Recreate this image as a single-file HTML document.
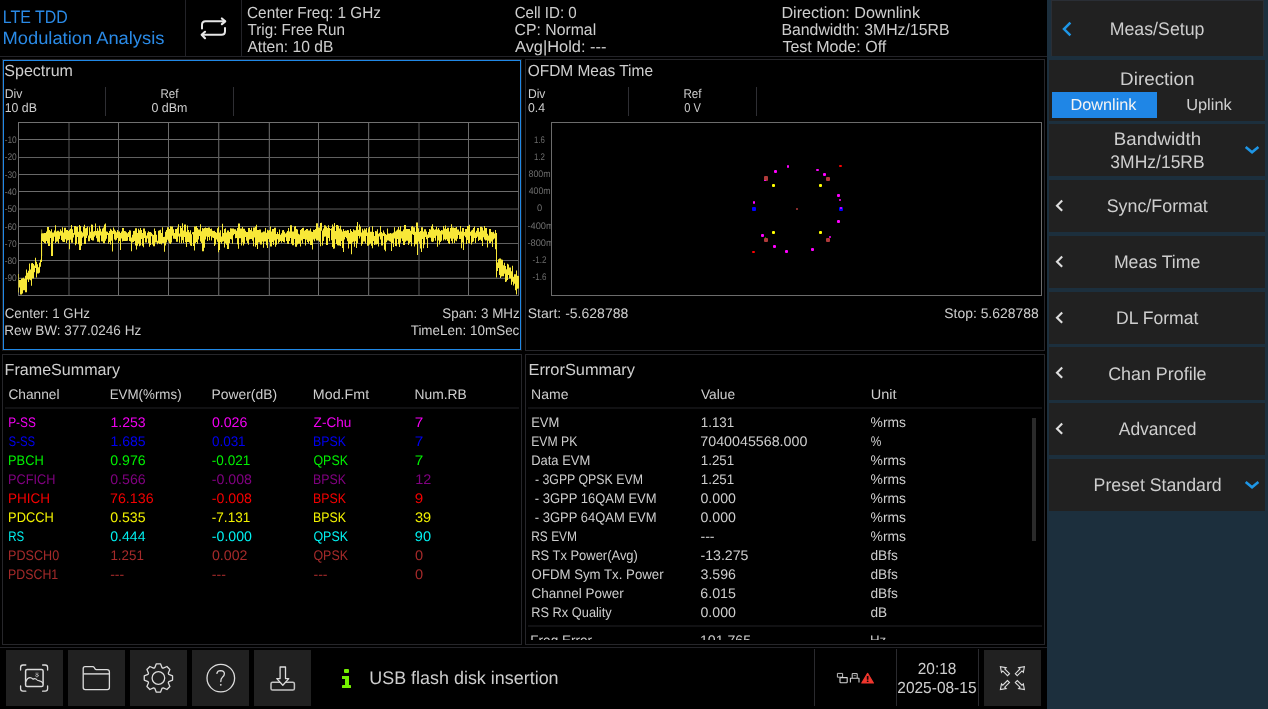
<!DOCTYPE html>
<html><head><meta charset="utf-8"><title>LTE TDD Modulation Analysis</title>
<style>
html,body{margin:0;padding:0;background:#000;}
body{width:1268px;height:709px;position:relative;overflow:hidden;font-family:"Liberation Sans",sans-serif;}
.t{position:absolute;left:0;top:0;white-space:pre;line-height:1;transform-origin:0 0;display:block;text-rendering:geometricPrecision;}
.b{position:absolute;}
svg{position:absolute;overflow:visible;}
#wrap{position:absolute;left:0;top:0;width:1268px;height:709px;will-change:transform;}
</style></head><body><div id="wrap">
<div class="b" style="left:0px;top:56px;width:1047px;height:1px;background:#232328;"></div>
<div class="b" style="left:185px;top:0px;width:1px;height:56px;background:#232328;"></div>
<div class="b" style="left:241px;top:0px;width:1px;height:56px;background:#232328;"></div>
<span class="t" style="font-size:18px;color:#2a8ae6;transform:translate(2.73px,8.40px) scaleX(0.8858);">LTE TDD</span>
<span class="t" style="font-size:17.8px;color:#2a8ae6;transform:translate(2.52px,30.30px) scaleX(1.0298);">Modulation Analysis</span>
<span class="t" style="font-size:16.1px;color:#cecece;transform:translate(247.03px,4.80px) scaleX(0.9538);">Center Freq: 1 GHz</span>
<span class="t" style="font-size:16.1px;color:#cecece;transform:translate(247.50px,21.70px) scaleX(0.9451);">Trig: Free Run</span>
<span class="t" style="font-size:16.1px;color:#cecece;transform:translate(247.40px,38.70px) scaleX(0.9700);">Atten: 10 dB</span>
<span class="t" style="font-size:16.1px;color:#cecece;transform:translate(514.64px,4.80px) scaleX(0.9387);">Cell ID: 0</span>
<span class="t" style="font-size:16.1px;color:#cecece;transform:translate(514.60px,21.70px) scaleX(0.9804);">CP: Normal</span>
<span class="t" style="font-size:16.1px;color:#cecece;transform:translate(515.00px,38.70px) scaleX(1.0196);">Avg|Hold: ---</span>
<span class="t" style="font-size:16.1px;color:#cecece;transform:translate(781.38px,4.80px) scaleX(1.0062);">Direction: Downlink</span>
<span class="t" style="font-size:16.1px;color:#cecece;transform:translate(781.41px,21.70px) scaleX(0.9837);">Bandwidth: 3MHz/15RB</span>
<span class="t" style="font-size:16.1px;color:#cecece;transform:translate(782.39px,38.70px) scaleX(0.9951);">Test Mode: Off</span>
<svg style="left:196px;top:14px" width="34" height="28" viewBox="196 14 34 28" fill="none" stroke="#e6e6e6" stroke-width="2" stroke-linecap="round" stroke-linejoin="round">
<path d="M202 28.6 V24.8 Q202 21.3 205.5 21.3 H224.6"/><path d="M221.9 18.5 L225.2 21.3 L221.9 24.2" stroke-width="2.2"/>
<path d="M225 27.9 V31.3 Q225 34.8 221.5 34.8 H202.4"/><path d="M205 31.8 L201.7 34.8 L205 38.2" stroke-width="2.2"/></svg>
<div class="b" style="left:2px;top:59px;width:520px;height:292px;background:transparent;box-sizing:border-box;border:1px solid #1a1715;border-top-color:#28282c;border-left-color:#242428;"></div>
<div class="b" style="left:3px;top:60px;width:518px;height:290px;background:transparent;box-sizing:border-box;border:1px solid #2088e6;"></div>
<div class="b" style="left:525px;top:59px;width:520px;height:292px;background:transparent;box-sizing:border-box;border:1px solid #26262a;"></div>
<div class="b" style="left:2px;top:354px;width:520px;height:291px;background:transparent;box-sizing:border-box;border:1px solid #26262a;"></div>
<div class="b" style="left:525px;top:354px;width:520px;height:291px;background:transparent;box-sizing:border-box;border:1px solid #26262a;"></div>
<div class="b" style="left:1047px;top:0px;width:221px;height:709px;background:#1c2f3d;"></div>
<div class="b" style="left:1051px;top:0px;width:213px;height:56px;background:#2a2e35;"></div>
<div class="b" style="left:1052px;top:1px;width:211px;height:55px;background:#212121;"></div>
<div class="b" style="left:1049px;top:60px;width:216px;height:61px;background:#212121;"></div>
<div class="b" style="left:1049px;top:124px;width:216px;height:52px;background:#212121;"></div>
<div class="b" style="left:1049px;top:180px;width:216px;height:52px;background:#212121;"></div>
<div class="b" style="left:1049px;top:236px;width:216px;height:52px;background:#212121;"></div>
<div class="b" style="left:1049px;top:292px;width:216px;height:52px;background:#212121;"></div>
<div class="b" style="left:1049px;top:347px;width:216px;height:53px;background:#212121;"></div>
<div class="b" style="left:1049px;top:403px;width:216px;height:52px;background:#212121;"></div>
<div class="b" style="left:1049px;top:459px;width:216px;height:52px;background:#212121;"></div>
<div class="b" style="left:1052px;top:92px;width:105px;height:26px;background:#1f86e6;"></div>
<div class="b" style="left:0px;top:647px;width:1047px;height:1px;background:#232328;"></div>
<div class="b" style="left:6px;top:650px;width:57px;height:56px;background:#212121;"></div>
<div class="b" style="left:68px;top:650px;width:57px;height:56px;background:#212121;"></div>
<div class="b" style="left:130px;top:650px;width:57px;height:56px;background:#212121;"></div>
<div class="b" style="left:192px;top:650px;width:57px;height:56px;background:#212121;"></div>
<div class="b" style="left:254px;top:650px;width:57px;height:56px;background:#212121;"></div>
<div class="b" style="left:984px;top:650px;width:57px;height:56px;background:#212121;"></div>
<div class="b" style="left:814px;top:649px;width:1px;height:57px;background:#2a2a2e;"></div>
<div class="b" style="left:896px;top:649px;width:1px;height:57px;background:#2a2a2e;"></div>
<div class="b" style="left:978px;top:649px;width:1px;height:57px;background:#2a2a2e;"></div>
<span class="t" style="font-size:16.1px;color:#cecece;transform:translate(4.32px,63.20px) scaleX(0.9963);">Spectrum</span>
<span class="t" style="font-size:12.8px;color:#cecece;transform:translate(4.65px,88.10px) scaleX(0.9543);">Div</span>
<span class="t" style="font-size:12.8px;color:#cecece;transform:translate(4.70px,102.00px) scaleX(0.9631);">10 dB</span>
<span class="t" style="font-size:12.8px;color:#cecece;transform:translate(160.39px,88.10px) scaleX(0.9053);">Ref</span>
<span class="t" style="font-size:12.8px;color:#cecece;transform:translate(151.41px,102.00px) scaleX(0.9734);">0 dBm</span>
<div class="b" style="left:105px;top:87px;width:1px;height:29px;background:#2e2e33;"></div>
<div class="b" style="left:233px;top:87px;width:1px;height:29px;background:#2e2e33;"></div>
<svg style="left:0;top:0" width="524" height="352" shape-rendering="crispEdges"><rect x="18" y="122" width="1" height="174" fill="#707070"/><rect x="68" y="122" width="1" height="174" fill="#2c2c2c"/><rect x="69" y="122" width="1" height="174" fill="#2c2c2c"/><rect x="118" y="122" width="1" height="174" fill="#6c6c6c"/><rect x="168" y="122" width="1" height="174" fill="#6c6c6c"/><rect x="218" y="122" width="1" height="174" fill="#545454"/><rect x="219" y="122" width="1" height="174" fill="#1c1c1c"/><rect x="268" y="122" width="1" height="174" fill="#161616"/><rect x="269" y="122" width="1" height="174" fill="#5a5a5a"/><rect x="318" y="122" width="1" height="174" fill="#6c6c6c"/><rect x="368" y="122" width="1" height="174" fill="#5e5e5e"/><rect x="369" y="122" width="1" height="174" fill="#121212"/><rect x="418" y="122" width="1" height="174" fill="#2c2c2c"/><rect x="419" y="122" width="1" height="174" fill="#2c2c2c"/><rect x="468" y="122" width="1" height="174" fill="#6c6c6c"/><rect x="518" y="122" width="1" height="174" fill="#626262"/><rect x="18" y="122" width="501" height="1" fill="#707070" style="mix-blend-mode:lighten"/><rect x="18" y="139" width="501" height="1" fill="#6c6c6c" style="mix-blend-mode:lighten"/><rect x="18" y="157" width="501" height="1" fill="#606060" style="mix-blend-mode:lighten"/><rect x="18" y="174" width="501" height="1" fill="#686868" style="mix-blend-mode:lighten"/><rect x="18" y="191" width="501" height="1" fill="#6c6c6c" style="mix-blend-mode:lighten"/><rect x="18" y="208" width="501" height="1" fill="#2c2c2c" style="mix-blend-mode:lighten"/><rect x="18" y="209" width="501" height="1" fill="#303030" style="mix-blend-mode:lighten"/><rect x="18" y="226" width="501" height="1" fill="#606060" style="mix-blend-mode:lighten"/><rect x="18" y="243" width="501" height="1" fill="#606060" style="mix-blend-mode:lighten"/><rect x="18" y="260" width="501" height="1" fill="#666666" style="mix-blend-mode:lighten"/><rect x="18" y="277" width="501" height="1" fill="#1c1c1c" style="mix-blend-mode:lighten"/><rect x="18" y="278" width="501" height="1" fill="#585858" style="mix-blend-mode:lighten"/><rect x="18" y="295" width="501" height="1" fill="#686868" style="mix-blend-mode:lighten"/></svg>
<span class="t" style="font-size:9.6px;color:#707070;transform:translate(4.67px,136.00px) scaleX(0.8720);">-10</span>
<span class="t" style="font-size:9.6px;color:#707070;transform:translate(4.67px,153.30px) scaleX(0.8720);">-20</span>
<span class="t" style="font-size:9.6px;color:#707070;transform:translate(4.67px,170.60px) scaleX(0.8720);">-30</span>
<span class="t" style="font-size:9.6px;color:#707070;transform:translate(4.67px,187.90px) scaleX(0.8720);">-40</span>
<span class="t" style="font-size:9.6px;color:#707070;transform:translate(4.67px,205.20px) scaleX(0.8720);">-50</span>
<span class="t" style="font-size:9.6px;color:#707070;transform:translate(4.67px,222.50px) scaleX(0.8720);">-60</span>
<span class="t" style="font-size:9.6px;color:#707070;transform:translate(4.67px,239.80px) scaleX(0.8720);">-70</span>
<span class="t" style="font-size:9.6px;color:#707070;transform:translate(4.67px,257.10px) scaleX(0.8720);">-80</span>
<span class="t" style="font-size:9.6px;color:#707070;transform:translate(4.67px,274.40px) scaleX(0.8720);">-90</span>
<svg style="left:0;top:0" width="524" height="352"><path d="M18.4 274.0h0.6V292.4h-0.6zM19 280.1h1V287.5h-1zM20 279.9h1V294.6h-1zM21 278.6h1V294.6h-1zM22 278.2h1V293.6h-1zM23 277.8h1V290.2h-1zM24 278.7h1V290.2h-1zM25 275.7h1V292.3h-1zM26 269.4h1V292.3h-1zM27 272.8h1V279.4h-1zM28 270.7h1V282.1h-1zM29 263.6h1V279.4h-1zM30 269.4h1V280.3h-1zM31 263.2h1V285.7h-1zM32 263.1h1V278.6h-1zM33 264.0h1V278.6h-1zM34 265.6h1V272.2h-1zM35 257.7h1V268.0h-1zM36 261.7h1V277.6h-1zM37 264.2h1V273.5h-1zM38 267.2h1V273.5h-1zM39 262.7h1V272.8h-1zM40 259.7h1V266.8h-1zM41 233.6h1V262.0h-1zM42 233.3h1V240.9h-1zM43 233.2h1V242.1h-1zM44 233.0h1V242.9h-1zM45 233.1h1V243.5h-1zM46 231.6h1V241.0h-1zM47 227.0h1V242.9h-1zM48 227.0h1V246.0h-1zM49 230.0h1V246.1h-1zM50 231.2h1V238.1h-1zM51 229.2h1V256.1h-1zM52 232.4h1V256.1h-1zM53 232.6h1V241.3h-1zM54 230.6h1V236.8h-1zM55 225.3h1V243.0h-1zM56 231.5h1V241.7h-1zM57 230.7h1V241.6h-1zM58 230.7h1V243.4h-1zM59 231.7h1V239.0h-1zM60 229.2h1V235.8h-1zM61 230.7h1V239.9h-1zM62 227.2h1V241.6h-1zM63 232.5h1V241.9h-1zM64 227.7h1V241.9h-1zM65 227.7h1V239.2h-1zM66 230.0h1V243.1h-1zM67 229.9h1V240.5h-1zM68 230.9h1V239.9h-1zM69 229.7h1V249.3h-1zM70 228.7h1V239.7h-1zM71 225.1h1V242.8h-1zM72 229.3h1V242.8h-1zM73 232.9h1V237.6h-1zM74 225.9h1V234.8h-1zM75 225.9h1V245.2h-1zM76 226.7h1V243.7h-1zM77 226.7h1V236.9h-1zM78 231.7h1V244.3h-1zM79 224.9h1V250.0h-1zM80 226.0h1V250.0h-1zM81 231.3h1V245.7h-1zM82 232.5h1V237.8h-1zM83 226.8h1V236.5h-1zM84 224.7h1V244.1h-1zM85 228.3h1V244.1h-1zM86 227.8h1V238.1h-1zM87 226.4h1V235.5h-1zM88 235.5h1V241.3h-1zM89 227.3h1V241.3h-1zM90 231.8h1V238.3h-1zM91 224.4h1V240.1h-1zM92 224.7h1V240.4h-1zM93 231.5h1V240.4h-1zM94 230.9h1V236.7h-1zM95 223.6h1V235.4h-1zM96 230.9h1V238.2h-1zM97 228.3h1V241.7h-1zM98 230.7h1V241.7h-1zM99 225.8h1V242.5h-1zM100 228.8h1V235.4h-1zM101 231.5h1V241.3h-1zM102 228.5h1V241.6h-1zM103 227.4h1V243.2h-1zM104 224.6h1V243.2h-1zM105 223.6h1V240.8h-1zM106 231.6h1V238.7h-1zM107 231.8h1V235.1h-1zM108 233.1h1V243.7h-1zM109 230.9h1V241.9h-1zM110 228.8h1V244.5h-1zM111 229.7h1V240.8h-1zM112 230.9h1V251.5h-1zM113 227.6h1V234.1h-1zM114 229.6h1V239.6h-1zM115 230.8h1V240.6h-1zM116 232.2h1V239.8h-1zM117 229.9h1V238.1h-1zM118 231.4h1V242.9h-1zM119 231.4h1V240.9h-1zM120 232.9h1V249.9h-1zM121 231.4h1V238.4h-1zM122 227.9h1V241.6h-1zM123 227.9h1V241.1h-1zM124 230.9h1V241.0h-1zM125 231.2h1V241.0h-1zM126 232.3h1V240.9h-1zM127 233.3h1V240.7h-1zM128 232.1h1V236.9h-1zM129 230.3h1V241.1h-1zM130 230.6h1V241.6h-1zM131 237.5h1V251.3h-1zM132 234.7h1V242.6h-1zM133 231.1h1V242.0h-1zM134 230.8h1V240.9h-1zM135 228.2h1V245.4h-1zM136 228.2h1V249.4h-1zM137 232.9h1V245.8h-1zM138 228.8h1V243.8h-1zM139 230.3h1V246.2h-1zM140 228.0h1V245.4h-1zM141 230.1h1V239.1h-1zM142 233.1h1V245.8h-1zM143 228.6h1V247.3h-1zM144 228.6h1V238.1h-1zM145 231.2h1V242.4h-1zM146 235.6h1V242.5h-1zM147 232.7h1V238.5h-1zM148 231.3h1V243.1h-1zM149 232.1h1V246.7h-1zM150 232.1h1V244.9h-1zM151 232.8h1V236.2h-1zM152 234.2h1V244.5h-1zM153 235.0h1V246.2h-1zM154 228.6h1V246.2h-1zM155 230.9h1V242.4h-1zM156 234.7h1V242.4h-1zM157 240.7h1V244.3h-1zM158 230.7h1V243.0h-1zM159 230.2h1V244.0h-1zM160 229.7h1V243.8h-1zM161 233.0h1V244.5h-1zM162 227.3h1V242.9h-1zM163 237.0h1V242.9h-1zM164 236.8h1V251.7h-1zM165 231.8h1V245.5h-1zM166 230.0h1V242.5h-1zM167 227.2h1V239.7h-1zM168 227.2h1V241.3h-1zM169 229.1h1V243.2h-1zM170 226.2h1V244.1h-1zM171 226.6h1V242.5h-1zM172 226.6h1V235.7h-1zM173 229.2h1V238.7h-1zM174 233.1h1V238.7h-1zM175 228.9h1V239.0h-1zM176 228.9h1V241.7h-1zM177 227.6h1V241.7h-1zM178 224.3h1V236.6h-1zM179 233.6h1V242.7h-1zM180 226.0h1V236.7h-1zM181 227.9h1V243.3h-1zM182 223.3h1V240.3h-1zM183 230.4h1V242.9h-1zM184 224.4h1V237.1h-1zM185 224.4h1V242.3h-1zM186 231.7h1V247.0h-1zM187 225.6h1V241.9h-1zM188 230.0h1V241.9h-1zM189 232.2h1V242.8h-1zM190 230.2h1V245.4h-1zM191 234.3h1V245.9h-1zM192 232.3h1V234.3h-1zM193 231.9h1V245.9h-1zM194 226.4h1V250.6h-1zM195 226.4h1V243.1h-1zM196 226.1h1V242.1h-1zM197 227.9h1V243.7h-1zM198 229.6h1V239.6h-1zM199 229.6h1V235.9h-1zM200 224.3h1V241.6h-1zM201 231.3h1V242.9h-1zM202 228.1h1V251.2h-1zM203 228.6h1V251.2h-1zM204 227.9h1V247.8h-1zM205 227.5h1V239.4h-1zM206 227.9h1V236.4h-1zM207 227.9h1V240.9h-1zM208 227.5h1V237.1h-1zM209 227.5h1V240.2h-1zM210 228.9h1V236.2h-1zM211 228.5h1V240.6h-1zM212 230.7h1V237.4h-1zM213 231.1h1V237.9h-1zM214 230.8h1V246.1h-1zM215 231.9h1V244.6h-1zM216 232.7h1V239.5h-1zM217 228.3h1V241.8h-1zM218 226.6h1V252.3h-1zM219 232.4h1V249.9h-1zM220 230.2h1V242.2h-1zM221 236.6h1V243.7h-1zM222 223.8h1V241.8h-1zM223 232.9h1V241.3h-1zM224 228.9h1V247.4h-1zM225 228.3h1V243.2h-1zM226 232.5h1V244.8h-1zM227 230.4h1V249.1h-1zM228 230.5h1V249.1h-1zM229 232.1h1V243.0h-1zM230 228.3h1V239.0h-1zM231 228.6h1V239.6h-1zM232 228.6h1V243.7h-1zM233 228.6h1V235.3h-1zM234 229.2h1V234.1h-1zM235 229.2h1V238.2h-1zM236 230.8h1V238.1h-1zM237 228.1h1V244.2h-1zM238 223.4h1V248.7h-1zM239 223.4h1V238.2h-1zM240 228.6h1V238.2h-1zM241 228.6h1V245.4h-1zM242 227.1h1V242.4h-1zM243 228.7h1V245.4h-1zM244 228.7h1V243.7h-1zM245 230.7h1V237.1h-1zM246 232.1h1V240.8h-1zM247 232.1h1V243.1h-1zM248 228.1h1V244.7h-1zM249 228.1h1V239.5h-1zM250 230.0h1V239.1h-1zM251 227.7h1V239.1h-1zM252 231.3h1V240.7h-1zM253 227.5h1V246.2h-1zM254 227.5h1V237.6h-1zM255 226.6h1V246.8h-1zM256 224.7h1V245.1h-1zM257 230.0h1V249.0h-1zM258 230.0h1V242.6h-1zM259 229.6h1V242.6h-1zM260 229.6h1V244.5h-1zM261 232.5h1V244.5h-1zM262 232.2h1V241.6h-1zM263 231.6h1V247.8h-1zM264 231.6h1V241.6h-1zM265 228.0h1V241.6h-1zM266 232.7h1V245.3h-1zM267 229.8h1V248.1h-1zM268 230.4h1V239.0h-1zM269 229.9h1V242.0h-1zM270 226.6h1V246.6h-1zM271 231.4h1V246.6h-1zM272 228.9h1V241.9h-1zM273 228.9h1V244.9h-1zM274 227.7h1V240.6h-1zM275 227.7h1V246.7h-1zM276 234.0h1V244.7h-1zM277 231.9h1V239.3h-1zM278 233.9h1V243.4h-1zM279 229.4h1V242.0h-1zM280 234.7h1V241.1h-1zM281 233.3h1V242.7h-1zM282 230.3h1V240.9h-1zM283 229.9h1V241.9h-1zM284 231.8h1V242.6h-1zM285 233.4h1V237.3h-1zM286 232.4h1V241.1h-1zM287 230.9h1V243.8h-1zM288 228.1h1V243.9h-1zM289 231.4h1V241.1h-1zM290 225.3h1V238.0h-1zM291 225.3h1V243.8h-1zM292 231.6h1V245.3h-1zM293 231.6h1V245.3h-1zM294 226.5h1V239.1h-1zM295 225.9h1V246.7h-1zM296 229.0h1V246.7h-1zM297 229.5h1V244.4h-1zM298 233.7h1V243.8h-1zM299 234.4h1V243.8h-1zM300 230.1h1V246.6h-1zM301 229.1h1V240.5h-1zM302 228.0h1V243.6h-1zM303 227.8h1V239.0h-1zM304 230.7h1V239.0h-1zM305 230.0h1V245.6h-1zM306 228.9h1V239.8h-1zM307 228.9h1V241.9h-1zM308 230.6h1V243.4h-1zM309 230.6h1V241.3h-1zM310 228.5h1V245.0h-1zM311 231.6h1V245.0h-1zM312 231.9h1V249.4h-1zM313 229.7h1V239.4h-1zM314 229.9h1V241.2h-1zM315 228.9h1V238.7h-1zM316 223.3h1V240.5h-1zM317 223.3h1V240.5h-1zM318 227.4h1V240.5h-1zM319 227.4h1V241.7h-1zM320 223.1h1V246.2h-1zM321 222.7h1V230.7h-1zM322 230.4h1V245.4h-1zM323 228.5h1V241.1h-1zM324 225.2h1V236.7h-1zM325 225.4h1V236.4h-1zM326 226.8h1V245.0h-1zM327 228.1h1V245.0h-1zM328 225.2h1V237.9h-1zM329 227.9h1V241.3h-1zM330 228.9h1V230.2h-1zM331 228.2h1V240.3h-1zM332 224.6h1V246.9h-1zM333 226.5h1V248.7h-1zM334 223.0h1V248.4h-1zM335 230.9h1V239.3h-1zM336 224.9h1V243.9h-1zM337 224.9h1V245.2h-1zM338 225.7h1V245.6h-1zM339 228.6h1V245.6h-1zM340 225.8h1V246.0h-1zM341 229.5h1V241.1h-1zM342 231.4h1V248.1h-1zM343 228.9h1V252.0h-1zM344 231.1h1V239.6h-1zM345 230.4h1V236.9h-1zM346 230.7h1V238.2h-1zM347 229.9h1V241.3h-1zM348 230.2h1V248.6h-1zM349 233.0h1V244.1h-1zM350 229.0h1V244.1h-1zM351 231.0h1V254.2h-1zM352 232.0h1V242.6h-1zM353 229.3h1V241.5h-1zM354 230.2h1V246.8h-1zM355 230.2h1V241.2h-1zM356 226.3h1V248.1h-1zM357 222.0h1V243.2h-1zM358 229.7h1V235.9h-1zM359 224.6h1V238.4h-1zM360 226.5h1V236.5h-1zM361 232.4h1V245.7h-1zM362 228.7h1V244.0h-1zM363 230.6h1V241.5h-1zM364 228.5h1V241.6h-1zM365 229.6h1V243.4h-1zM366 228.0h1V236.0h-1zM367 232.5h1V245.7h-1zM368 228.6h1V245.7h-1zM369 227.1h1V244.5h-1zM370 231.8h1V243.5h-1zM371 231.8h1V245.8h-1zM372 226.3h1V248.3h-1zM373 232.0h1V240.9h-1zM374 236.1h1V245.0h-1zM375 231.1h1V244.5h-1zM376 231.2h1V244.5h-1zM377 229.3h1V244.1h-1zM378 233.8h1V246.5h-1zM379 232.8h1V236.5h-1zM380 226.0h1V239.5h-1zM381 231.9h1V245.5h-1zM382 233.3h1V245.5h-1zM383 230.6h1V236.1h-1zM384 232.6h1V249.8h-1zM385 234.0h1V251.3h-1zM386 234.8h1V242.2h-1zM387 228.5h1V240.5h-1zM388 233.5h1V240.5h-1zM389 233.6h1V241.2h-1zM390 233.0h1V241.8h-1zM391 233.5h1V250.9h-1zM392 233.3h1V243.0h-1zM393 232.4h1V247.0h-1zM394 227.2h1V238.5h-1zM395 231.5h1V246.0h-1zM396 230.5h1V246.3h-1zM397 229.4h1V239.1h-1zM398 226.9h1V244.2h-1zM399 229.8h1V247.0h-1zM400 226.3h1V242.8h-1zM401 231.2h1V238.6h-1zM402 231.2h1V241.0h-1zM403 229.4h1V245.0h-1zM404 225.0h1V245.0h-1zM405 225.0h1V241.7h-1zM406 228.9h1V240.8h-1zM407 228.9h1V240.8h-1zM408 228.9h1V245.0h-1zM409 229.1h1V243.3h-1zM410 230.8h1V242.3h-1zM411 226.6h1V246.3h-1zM412 226.0h1V234.2h-1zM413 227.3h1V235.0h-1zM414 227.3h1V246.5h-1zM415 231.7h1V244.2h-1zM416 222.4h1V244.2h-1zM417 222.4h1V254.9h-1zM418 228.3h1V241.5h-1zM419 232.1h1V243.7h-1zM420 231.0h1V248.4h-1zM421 227.2h1V252.0h-1zM422 227.2h1V238.9h-1zM423 231.4h1V248.2h-1zM424 229.3h1V244.5h-1zM425 229.3h1V236.9h-1zM426 231.6h1V239.2h-1zM427 234.6h1V247.9h-1zM428 232.0h1V238.1h-1zM429 229.0h1V237.5h-1zM430 229.5h1V237.7h-1zM431 226.2h1V241.4h-1zM432 224.2h1V241.9h-1zM433 228.5h1V241.5h-1zM434 229.7h1V237.9h-1zM435 229.3h1V240.8h-1zM436 226.8h1V235.7h-1zM437 229.4h1V246.8h-1zM438 227.9h1V240.4h-1zM439 229.8h1V244.6h-1zM440 231.1h1V242.0h-1zM441 229.9h1V240.8h-1zM442 230.2h1V234.5h-1zM443 225.9h1V240.4h-1zM444 228.6h1V239.3h-1zM445 225.5h1V240.3h-1zM446 229.0h1V239.3h-1zM447 227.8h1V241.0h-1zM448 227.8h1V243.3h-1zM449 231.5h1V244.1h-1zM450 228.0h1V238.5h-1zM451 224.2h1V240.9h-1zM452 227.4h1V243.4h-1zM453 227.4h1V238.7h-1zM454 227.9h1V243.1h-1zM455 227.7h1V240.4h-1zM456 226.9h1V241.2h-1zM457 229.5h1V238.7h-1zM458 229.5h1V235.1h-1zM459 231.5h1V239.0h-1zM460 226.0h1V238.9h-1zM461 231.5h1V248.3h-1zM462 227.9h1V242.4h-1zM463 227.9h1V250.1h-1zM464 232.0h1V235.7h-1zM465 228.9h1V237.2h-1zM466 229.0h1V244.1h-1zM467 226.0h1V240.0h-1zM468 226.0h1V243.2h-1zM469 224.7h1V243.2h-1zM470 231.7h1V235.7h-1zM471 230.5h1V244.4h-1zM472 229.8h1V242.2h-1zM473 227.9h1V241.5h-1zM474 226.5h1V238.1h-1zM475 232.4h1V243.0h-1zM476 230.8h1V237.9h-1zM477 228.1h1V236.7h-1zM478 228.1h1V241.1h-1zM479 231.8h1V240.0h-1zM480 226.8h1V239.8h-1zM481 226.8h1V240.9h-1zM482 227.4h1V246.0h-1zM483 230.6h1V237.3h-1zM484 225.9h1V239.5h-1zM485 227.9h1V240.5h-1zM486 227.9h1V240.3h-1zM487 233.8h1V247.5h-1zM488 235.4h1V240.8h-1zM489 229.0h1V242.9h-1zM490 229.0h1V243.0h-1zM491 232.1h1V241.4h-1zM492 232.2h1V246.9h-1zM493 231.7h1V239.5h-1zM494 233.5h1V238.5h-1zM495 230.0h1V249.3h-1zM496 233.1h1V277.5h-1zM497 262.4h1V271.1h-1zM498 259.2h1V267.9h-1zM499 258.4h1V274.9h-1zM500 258.4h1V278.1h-1zM501 259.5h1V276.6h-1zM502 259.8h1V276.2h-1zM503 265.3h1V276.2h-1zM504 262.8h1V273.7h-1zM505 266.1h1V282.1h-1zM506 269.3h1V281.4h-1zM507 263.8h1V280.1h-1zM508 264.5h1V274.9h-1zM509 267.5h1V278.4h-1zM510 267.6h1V278.4h-1zM511 271.2h1V284.7h-1zM512 265.7h1V281.7h-1zM513 276.7h1V285.6h-1zM514 274.2h1V283.8h-1zM515 274.2h1V290.2h-1zM516 270.4h1V294.6h-1zM517 275.8h1V288.7h-1zM518 276.0h1V288.5h-1zM41.5 229.5h.6V256h-.6z" fill="#f8e838"/></svg>
<span class="t" style="font-size:13.9px;color:#cecece;transform:translate(4.74px,307.30px) scaleX(0.9598);">Center: 1 GHz</span>
<span class="t" style="font-size:13.9px;color:#cecece;transform:translate(4.30px,324.20px) scaleX(0.9761);">Rew BW: 377.0246 Hz</span>
<span class="t" style="font-size:13.9px;color:#cecece;transform:translate(442.30px,307.30px) scaleX(0.9635);">Span: 3 MHz</span>
<span class="t" style="font-size:13.9px;color:#cecece;transform:translate(410.66px,324.20px) scaleX(0.9686);">TimeLen: 10mSec</span>
<span class="t" style="font-size:16.1px;color:#cecece;transform:translate(527.68px,63.20px) scaleX(0.9600);">OFDM Meas Time</span>
<span class="t" style="font-size:12.8px;color:#cecece;transform:translate(527.96px,88.10px) scaleX(0.9429);">Div</span>
<span class="t" style="font-size:12.8px;color:#cecece;transform:translate(527.92px,102.00px) scaleX(0.9565);">0.4</span>
<span class="t" style="font-size:12.8px;color:#cecece;transform:translate(683.44px,88.10px) scaleX(0.9105);">Ref</span>
<span class="t" style="font-size:12.8px;color:#cecece;transform:translate(684.17px,102.00px) scaleX(0.8669);">0 V</span>
<div class="b" style="left:628px;top:87px;width:1px;height:29px;background:#2e2e33;"></div>
<div class="b" style="left:756px;top:87px;width:1px;height:29px;background:#2e2e33;"></div>
<div class="b" style="left:551px;top:122px;width:491px;height:174px;background:transparent;box-sizing:border-box;border:1px solid #6c6c6c;"></div>
<div class="b" style="left:526px;top:125px;width:25px;height:168px;overflow:hidden">
<span class="t" style="font-size:9.6px;color:#6c6c6c;transform:translate(7.94px,11.10px) scaleX(0.8163);">1.6</span>
<span class="t" style="font-size:9.6px;color:#6c6c6c;transform:translate(7.94px,28.10px) scaleX(0.8205);">1.2</span>
<span class="t" style="font-size:9.6px;color:#6c6c6c;transform:translate(2.50px,45.00px) scaleX(0.9211);">800m</span>
<span class="t" style="font-size:9.6px;color:#6c6c6c;transform:translate(2.68px,62.10px) scaleX(0.9137);">400m</span>
<span class="t" style="font-size:9.6px;color:#6c6c6c;transform:translate(10.89px,79.10px) scaleX(0.9730);">0</span>
<span class="t" style="font-size:9.6px;color:#6c6c6c;transform:translate(1.44px,96.50px) scaleX(0.9653);">-400m</span>
<span class="t" style="font-size:9.6px;color:#6c6c6c;transform:translate(1.44px,113.50px) scaleX(0.9653);">-800m</span>
<span class="t" style="font-size:9.6px;color:#6c6c6c;transform:translate(6.59px,130.50px) scaleX(0.8381);">-1.2</span>
<span class="t" style="font-size:9.6px;color:#6c6c6c;transform:translate(6.59px,148.40px) scaleX(0.8348);">-1.6</span>
</div>
<div class="b" style="left:786.6px;top:165.4px;width:2.6px;height:2.6px;background:#f0f;border-radius:1px;"></div>
<div class="b" style="left:774.1px;top:170.1px;width:3px;height:3px;background:#f0f;border-radius:1px;"></div>
<div class="b" style="left:816.2px;top:168.9px;width:2.6px;height:2.6px;background:#f0f;border-radius:1px;"></div>
<div class="b" style="left:823.2px;top:173.2px;width:2.8px;height:2.8px;background:#f0f;border-radius:1px;"></div>
<div class="b" style="left:839.4px;top:164.9px;width:2.4px;height:2.4px;background:#f00;border-radius:1px;"></div>
<div class="b" style="left:764.1px;top:176.3px;width:4.4px;height:4.4px;background:#b03a3a;border-radius:1px;"></div>
<div class="b" style="left:826.1px;top:176.5px;width:4.4px;height:4.4px;background:#b03a3a;border-radius:1px;"></div>
<div class="b" style="left:771.7px;top:183.9px;width:3px;height:3px;background:#ff0;border-radius:1px;"></div>
<div class="b" style="left:819.1px;top:183.9px;width:3px;height:3px;background:#ff0;border-radius:1px;"></div>
<div class="b" style="left:837.1px;top:194.4px;width:3px;height:3px;background:#f0f;border-radius:1px;"></div>
<div class="b" style="left:838.7px;top:198.9px;width:2.6px;height:2.6px;background:#f0f;border-radius:1px;"></div>
<div class="b" style="left:752.7px;top:201.4px;width:2.4px;height:2.4px;background:#f0f;border-radius:1px;"></div>
<div class="b" style="left:751.5px;top:207.1px;width:4px;height:4px;background:#00f;border-radius:1px;"></div>
<div class="b" style="left:838.8px;top:207.1px;width:4px;height:4px;background:#00f;border-radius:1px;"></div>
<div class="b" style="left:839.8px;top:207.2px;width:2.2px;height:2.2px;background:#f0f;border-radius:1px;"></div>
<div class="b" style="left:796.3px;top:207.9px;width:2px;height:2px;background:#b03a3a;border-radius:1px;"></div>
<div class="b" style="left:836.9px;top:219.8px;width:3px;height:3px;background:#f0f;border-radius:1px;"></div>
<div class="b" style="left:771.6px;top:231px;width:3.2px;height:3.2px;background:#ff0;border-radius:1px;"></div>
<div class="b" style="left:819.1px;top:231.1px;width:3px;height:3px;background:#ff0;border-radius:1px;"></div>
<div class="b" style="left:760.8px;top:234.2px;width:2.8px;height:2.8px;background:#f0f;border-radius:1px;"></div>
<div class="b" style="left:764.1px;top:237.5px;width:4.4px;height:4.4px;background:#b03a3a;border-radius:1px;"></div>
<div class="b" style="left:825.6px;top:237.6px;width:4.2px;height:4.2px;background:#b03a3a;border-radius:1px;"></div>
<div class="b" style="left:828.8px;top:235.6px;width:2.6px;height:2.6px;background:#f0f;border-radius:1px;"></div>
<div class="b" style="left:773px;top:245.2px;width:2.8px;height:2.8px;background:#f0f;border-radius:1px;"></div>
<div class="b" style="left:785.4px;top:250px;width:3px;height:3px;background:#f0f;border-radius:1px;"></div>
<div class="b" style="left:811px;top:247.7px;width:3px;height:3px;background:#f0f;border-radius:1px;"></div>
<div class="b" style="left:752px;top:250.8px;width:2.6px;height:2.6px;background:#f00;border-radius:1px;"></div>
<div class="b" style="left:764.2px;top:179.5px;width:1.6px;height:1.6px;background:#f0f;border-radius:1px;"></div>
<div class="b" style="left:764.5px;top:236.9px;width:1.4px;height:1.4px;background:#0c0;border-radius:1px;"></div>
<span class="t" style="font-size:13.9px;color:#cecece;transform:translate(527.77px,306.80px) scaleX(1.0090);">Start: -5.628788</span>
<span class="t" style="font-size:13.9px;color:#cecece;transform:translate(944.27px,306.80px) scaleX(1.0017);">Stop: 5.628788</span>
<span class="t" style="font-size:16.1px;color:#cecece;transform:translate(4.59px,361.50px) scaleX(1.0004);">FrameSummary</span>
<span class="t" style="font-size:13.9px;color:#cecece;transform:translate(8.42px,388.10px) scaleX(0.9875);">Channel</span>
<span class="t" style="font-size:13.9px;color:#cecece;transform:translate(109.72px,388.10px) scaleX(0.9600);">EVM(%rms)</span>
<span class="t" style="font-size:13.9px;color:#cecece;transform:translate(211.58px,388.10px) scaleX(0.9980);">Power(dB)</span>
<span class="t" style="font-size:13.9px;color:#cecece;transform:translate(312.84px,388.10px) scaleX(1.0268);">Mod.Fmt</span>
<span class="t" style="font-size:13.9px;color:#cecece;transform:translate(414.48px,388.10px) scaleX(0.9956);">Num.RB</span>
<div class="b" style="left:5px;top:407px;width:514px;height:2px;background:#111113;"></div>
<span class="t" style="font-size:13.9px;color:#f200f2;transform:translate(8.14px,416.00px) scaleX(0.8555);">P-SS</span>
<span class="t" style="font-size:13.9px;color:#f200f2;transform:translate(110.39px,416.00px) scaleX(1.0149);">1.253</span>
<span class="t" style="font-size:13.9px;color:#f200f2;transform:translate(211.89px,416.00px) scaleX(1.0207);">0.026</span>
<span class="t" style="font-size:13.9px;color:#f200f2;transform:translate(313.57px,416.00px) scaleX(0.9788);">Z-Chu</span>
<span class="t" style="font-size:13.9px;color:#f200f2;transform:translate(414.74px,416.00px) scaleX(1.1027);">7</span>
<span class="t" style="font-size:13.9px;color:#0000f2;transform:translate(8.59px,435.00px) scaleX(0.8193);">S-SS</span>
<span class="t" style="font-size:13.9px;color:#0000f2;transform:translate(110.39px,435.00px) scaleX(1.0130);">1.685</span>
<span class="t" style="font-size:13.9px;color:#0000f2;transform:translate(211.92px,435.00px) scaleX(0.9689);">0.031</span>
<span class="t" style="font-size:13.9px;color:#0000f2;transform:translate(313.00px,435.00px) scaleX(0.8895);">BPSK</span>
<span class="t" style="font-size:13.9px;color:#0000f2;transform:translate(414.74px,435.00px) scaleX(1.1027);">7</span>
<span class="t" style="font-size:13.9px;color:#00f000;transform:translate(8.06px,454.00px) scaleX(0.9225);">PBCH</span>
<span class="t" style="font-size:13.9px;color:#00f000;transform:translate(110.19px,454.00px) scaleX(1.0207);">0.976</span>
<span class="t" style="font-size:13.9px;color:#00f000;transform:translate(211.85px,454.00px) scaleX(0.9736);">-0.021</span>
<span class="t" style="font-size:13.9px;color:#00f000;transform:translate(313.44px,454.00px) scaleX(0.8939);">QPSK</span>
<span class="t" style="font-size:13.9px;color:#00f000;transform:translate(414.74px,454.00px) scaleX(1.1027);">7</span>
<span class="t" style="font-size:13.9px;color:#800080;transform:translate(8.07px,473.00px) scaleX(0.9163);">PCFICH</span>
<span class="t" style="font-size:13.9px;color:#800080;transform:translate(110.19px,473.00px) scaleX(1.0207);">0.566</span>
<span class="t" style="font-size:13.9px;color:#800080;transform:translate(211.83px,473.00px) scaleX(1.0192);">-0.008</span>
<span class="t" style="font-size:13.9px;color:#800080;transform:translate(313.00px,473.00px) scaleX(0.8895);">BPSK</span>
<span class="t" style="font-size:13.9px;color:#800080;transform:translate(415.16px,473.00px) scaleX(1.0371);">12</span>
<span class="t" style="font-size:13.9px;color:#f40000;transform:translate(8.01px,492.00px) scaleX(0.9722);">PHICH</span>
<span class="t" style="font-size:13.9px;color:#f40000;transform:translate(109.99px,492.00px) scaleX(1.0258);">76.136</span>
<span class="t" style="font-size:13.9px;color:#f40000;transform:translate(211.83px,492.00px) scaleX(1.0192);">-0.008</span>
<span class="t" style="font-size:13.9px;color:#f40000;transform:translate(313.00px,492.00px) scaleX(0.8895);">BPSK</span>
<span class="t" style="font-size:13.9px;color:#f40000;transform:translate(414.82px,492.00px) scaleX(1.0920);">9</span>
<span class="t" style="font-size:13.9px;color:#f2f200;transform:translate(8.06px,511.00px) scaleX(0.9252);">PDCCH</span>
<span class="t" style="font-size:13.9px;color:#f2f200;transform:translate(110.19px,511.00px) scaleX(1.0188);">0.535</span>
<span class="t" style="font-size:13.9px;color:#f2f200;transform:translate(211.85px,511.00px) scaleX(0.9736);">-7.131</span>
<span class="t" style="font-size:13.9px;color:#f2f200;transform:translate(313.00px,511.00px) scaleX(0.8895);">BPSK</span>
<span class="t" style="font-size:13.9px;color:#f2f200;transform:translate(414.98px,511.00px) scaleX(1.0498);">39</span>
<span class="t" style="font-size:13.9px;color:#00f0f0;transform:translate(8.17px,530.00px) scaleX(0.8286);">RS</span>
<span class="t" style="font-size:13.9px;color:#00f0f0;transform:translate(110.19px,530.00px) scaleX(1.0150);">0.444</span>
<span class="t" style="font-size:13.9px;color:#00f0f0;transform:translate(211.83px,530.00px) scaleX(1.0175);">-0.000</span>
<span class="t" style="font-size:13.9px;color:#00f0f0;transform:translate(313.44px,530.00px) scaleX(0.8939);">QPSK</span>
<span class="t" style="font-size:13.9px;color:#00f0f0;transform:translate(414.84px,530.00px) scaleX(1.0498);">90</span>
<span class="t" style="font-size:13.9px;color:#a52a2a;transform:translate(8.08px,549.00px) scaleX(0.9062);">PDSCH0</span>
<span class="t" style="font-size:13.9px;color:#a52a2a;transform:translate(110.44px,549.00px) scaleX(0.9624);">1.251</span>
<span class="t" style="font-size:13.9px;color:#a52a2a;transform:translate(211.89px,549.00px) scaleX(1.0226);">0.002</span>
<span class="t" style="font-size:13.9px;color:#a52a2a;transform:translate(313.44px,549.00px) scaleX(0.8939);">QPSK</span>
<span class="t" style="font-size:13.9px;color:#a52a2a;transform:translate(414.97px,549.00px) scaleX(1.0512);">0</span>
<span class="t" style="font-size:13.9px;color:#a52a2a;transform:translate(8.10px,568.00px) scaleX(0.8899);">PDSCH1</span>
<span class="t" style="font-size:13.9px;color:#a52a2a;transform:translate(110.13px,568.00px) scaleX(1.0118);">---</span>
<span class="t" style="font-size:13.9px;color:#a52a2a;transform:translate(211.83px,568.00px) scaleX(1.0118);">---</span>
<span class="t" style="font-size:13.9px;color:#a52a2a;transform:translate(313.43px,568.00px) scaleX(1.0196);">---</span>
<span class="t" style="font-size:13.9px;color:#a52a2a;transform:translate(414.97px,568.00px) scaleX(1.0512);">0</span>
<span class="t" style="font-size:16.1px;color:#cecece;transform:translate(528.46px,361.50px) scaleX(1.0184);">ErrorSummary</span>
<span class="t" style="font-size:13.9px;color:#cecece;transform:translate(531.07px,388.10px) scaleX(1.0081);">Name</span>
<span class="t" style="font-size:13.9px;color:#cecece;transform:translate(700.94px,388.10px) scaleX(0.9908);">Value</span>
<span class="t" style="font-size:13.9px;color:#cecece;transform:translate(870.69px,388.10px) scaleX(1.0440);">Unit</span>
<div class="b" style="left:528px;top:407px;width:514px;height:2px;background:#111113;"></div>
<div class="b" style="left:528px;top:625px;width:514px;height:2px;background:#111113;"></div>
<div class="b" style="left:1032px;top:418px;width:4px;height:123px;background:#2a2a2a;"></div>
<span class="t" style="font-size:13.9px;color:#cecece;transform:translate(531.15px,416.00px) scaleX(0.9348);">EVM</span>
<span class="t" style="font-size:13.9px;color:#cecece;transform:translate(700.74px,416.00px) scaleX(0.9624);">1.131</span>
<span class="t" style="font-size:13.9px;color:#cecece;transform:translate(870.56px,416.00px) scaleX(0.9971);">%rms</span>
<span class="t" style="font-size:13.9px;color:#cecece;transform:translate(531.21px,435.00px) scaleX(0.8791);">EVM PK</span>
<span class="t" style="font-size:13.9px;color:#cecece;transform:translate(700.29px,435.00px) scaleX(1.0267);">7040045568.000</span>
<span class="t" style="font-size:13.9px;color:#cecece;transform:translate(870.63px,435.00px) scaleX(0.8568);">%</span>
<span class="t" style="font-size:13.9px;color:#cecece;transform:translate(531.15px,454.00px) scaleX(0.9344);">Data EVM</span>
<span class="t" style="font-size:13.9px;color:#cecece;transform:translate(700.74px,454.00px) scaleX(0.9624);">1.251</span>
<span class="t" style="font-size:13.9px;color:#cecece;transform:translate(870.56px,454.00px) scaleX(0.9971);">%rms</span>
<span class="t" style="font-size:13.9px;color:#cecece;transform:translate(534.90px,473.00px) scaleX(0.8876);">- 3GPP QPSK EVM</span>
<span class="t" style="font-size:13.9px;color:#cecece;transform:translate(700.74px,473.00px) scaleX(0.9624);">1.251</span>
<span class="t" style="font-size:13.9px;color:#cecece;transform:translate(870.56px,473.00px) scaleX(0.9971);">%rms</span>
<span class="t" style="font-size:13.9px;color:#cecece;transform:translate(534.87px,492.00px) scaleX(0.9348);">- 3GPP 16QAM EVM</span>
<span class="t" style="font-size:13.9px;color:#cecece;transform:translate(700.49px,492.00px) scaleX(1.0188);">0.000</span>
<span class="t" style="font-size:13.9px;color:#cecece;transform:translate(870.56px,492.00px) scaleX(0.9971);">%rms</span>
<span class="t" style="font-size:13.9px;color:#cecece;transform:translate(534.87px,511.00px) scaleX(0.9348);">- 3GPP 64QAM EVM</span>
<span class="t" style="font-size:13.9px;color:#cecece;transform:translate(700.49px,511.00px) scaleX(1.0188);">0.000</span>
<span class="t" style="font-size:13.9px;color:#cecece;transform:translate(870.56px,511.00px) scaleX(0.9971);">%rms</span>
<span class="t" style="font-size:13.9px;color:#cecece;transform:translate(531.23px,530.00px) scaleX(0.8599);">RS EVM</span>
<span class="t" style="font-size:13.9px;color:#cecece;transform:translate(700.43px,530.00px) scaleX(1.0196);">---</span>
<span class="t" style="font-size:13.9px;color:#cecece;transform:translate(870.56px,530.00px) scaleX(0.9971);">%rms</span>
<span class="t" style="font-size:13.9px;color:#cecece;transform:translate(531.15px,549.00px) scaleX(0.9321);">RS Tx Power(Avg)</span>
<span class="t" style="font-size:13.9px;color:#cecece;transform:translate(700.43px,549.00px) scaleX(1.0199);">-13.275</span>
<span class="t" style="font-size:13.9px;color:#cecece;transform:translate(870.45px,549.00px) scaleX(0.9855);">dBfs</span>
<span class="t" style="font-size:13.9px;color:#cecece;transform:translate(531.61px,568.00px) scaleX(0.9514);">OFDM Sym Tx. Power</span>
<span class="t" style="font-size:13.9px;color:#cecece;transform:translate(700.49px,568.00px) scaleX(1.0207);">3.596</span>
<span class="t" style="font-size:13.9px;color:#cecece;transform:translate(870.45px,568.00px) scaleX(0.9855);">dBfs</span>
<span class="t" style="font-size:13.9px;color:#cecece;transform:translate(531.53px,587.00px) scaleX(0.9702);">Channel Power</span>
<span class="t" style="font-size:13.9px;color:#cecece;transform:translate(700.30px,587.00px) scaleX(1.0245);">6.015</span>
<span class="t" style="font-size:13.9px;color:#cecece;transform:translate(870.45px,587.00px) scaleX(0.9855);">dBfs</span>
<span class="t" style="font-size:13.9px;color:#cecece;transform:translate(531.16px,606.00px) scaleX(0.9233);">RS Rx Quality</span>
<span class="t" style="font-size:13.9px;color:#cecece;transform:translate(700.49px,606.00px) scaleX(1.0188);">0.000</span>
<span class="t" style="font-size:13.9px;color:#cecece;transform:translate(870.45px,606.00px) scaleX(0.9817);">dB</span>
<div class="b" style="left:526px;top:628px;width:516px;height:12px;overflow:hidden">
<span class="t" style="font-size:13.9px;color:#cecece;transform:translate(4.30px,5.70px) scaleX(0.9768);">Freq Error</span>
<span class="t" style="font-size:13.9px;color:#cecece;transform:translate(173.98px,5.70px) scaleX(1.0176);">101.765</span>
<span class="t" style="font-size:13.9px;color:#cecece;transform:translate(343.92px,5.70px) scaleX(0.9587);">Hz</span>
</div>
<span class="t" style="font-size:18.2px;color:#cecece;transform:translate(1109.70px,19.70px) scaleX(0.9760);">Meas/Setup</span>
<span class="t" style="font-size:18.2px;color:#cecece;transform:translate(1120.06px,70.20px) scaleX(1.0373);">Direction</span>
<span class="t" style="font-size:16.1px;color:#f4f4f4;transform:translate(1070.42px,97.20px) scaleX(1.0111);">Downlink</span>
<span class="t" style="font-size:16.1px;color:#cecece;transform:translate(1186.14px,97.20px) scaleX(1.0186);">Uplink</span>
<span class="t" style="font-size:18.2px;color:#cecece;transform:translate(1113.87px,130.00px) scaleX(1.0266);">Bandwidth</span>
<span class="t" style="font-size:18.2px;color:#cecece;transform:translate(1110.34px,152.50px) scaleX(0.9623);">3MHz/15RB</span>
<span class="t" style="font-size:18.2px;color:#cecece;transform:translate(1106.65px,197.20px) scaleX(0.9815);">Sync/Format</span>
<span class="t" style="font-size:18.2px;color:#cecece;transform:translate(1113.90px,253.40px) scaleX(0.9713);">Meas Time</span>
<span class="t" style="font-size:18.2px;color:#cecece;transform:translate(1116.01px,309.30px) scaleX(0.9655);">DL Format</span>
<span class="t" style="font-size:18.2px;color:#cecece;transform:translate(1108.14px,364.50px) scaleX(0.9834);">Chan Profile</span>
<span class="t" style="font-size:18.2px;color:#cecece;transform:translate(1118.75px,420.20px) scaleX(0.9592);">Advanced</span>
<span class="t" style="font-size:18.2px;color:#cecece;transform:translate(1093.60px,476.10px) scaleX(0.9746);">Preset Standard</span>
<svg style="left:1060.8px;top:19.6px" width="12.2" height="18.1" viewBox="0 0 12.2 18.1" fill="none" stroke="#1e96e6" stroke-width="2.5" stroke-linecap="butt" stroke-linejoin="miter"><path d="M9.4 2.6 L3 9.05 L9.4 15.5"/></svg>
<svg style="left:1053.6px;top:198.1px" width="11" height="15.4" viewBox="0 0 11 15.4" fill="none" stroke="#dedede" stroke-width="2.1" stroke-linecap="butt" stroke-linejoin="miter"><path d="M8.2 2.6 L3 7.7 L8.2 12.8"/></svg>
<svg style="left:1053.6px;top:254.1px" width="11" height="15.4" viewBox="0 0 11 15.4" fill="none" stroke="#dedede" stroke-width="2.1" stroke-linecap="butt" stroke-linejoin="miter"><path d="M8.2 2.6 L3 7.7 L8.2 12.8"/></svg>
<svg style="left:1053.6px;top:309.9px" width="11" height="15.4" viewBox="0 0 11 15.4" fill="none" stroke="#dedede" stroke-width="2.1" stroke-linecap="butt" stroke-linejoin="miter"><path d="M8.2 2.6 L3 7.7 L8.2 12.8"/></svg>
<svg style="left:1053.6px;top:365.3px" width="11" height="15.4" viewBox="0 0 11 15.4" fill="none" stroke="#dedede" stroke-width="2.1" stroke-linecap="butt" stroke-linejoin="miter"><path d="M8.2 2.6 L3 7.7 L8.2 12.8"/></svg>
<svg style="left:1053.6px;top:420.9px" width="11" height="15.4" viewBox="0 0 11 15.4" fill="none" stroke="#dedede" stroke-width="2.1" stroke-linecap="butt" stroke-linejoin="miter"><path d="M8.2 2.6 L3 7.7 L8.2 12.8"/></svg>
<svg style="left:1243.1px;top:144.4px" width="18.1" height="11.4" viewBox="0 0 18.1 11.4" fill="none" stroke="#1e96e6" stroke-width="2.6" stroke-linecap="butt" stroke-linejoin="miter"><path d="M2.7 2.9 L9.05 8.2 L15.4 2.9"/></svg>
<svg style="left:1243.1px;top:479px" width="18.1" height="11.4" viewBox="0 0 18.1 11.4" fill="none" stroke="#1e96e6" stroke-width="2.6" stroke-linecap="butt" stroke-linejoin="miter"><path d="M2.7 2.9 L9.05 8.2 L15.4 2.9"/></svg>
<svg style="left:18px;top:662px" width="32" height="32" viewBox="18 662 32 32" fill="none" stroke="#dcdcdc" stroke-width="1.3" stroke-linecap="round" stroke-linejoin="round">
<path d="M20.6 670 V667.4 Q20.6 665 23 665 H25.8"/><path d="M42.6 665 H45.2 Q47.6 665 47.6 667.4 V670"/>
<path d="M20.6 686 V688.8 Q20.6 691.2 23 691.2 H25.8"/><path d="M42.6 691.2 H45.2 Q47.6 691.2 47.6 688.8 V686"/>
<rect x="25.6" y="669.5" width="17.5" height="17" rx="1.6" stroke-width="1.5"/>
<path d="M25.8 681.4 Q27.6 677.6 30 677.6 Q31.6 677.6 33 679.2 Q34.6 678 36 679 Q37.4 680.8 39.4 680.8 Q41.4 681 42.8 683" stroke-width="1.2"/>
<circle cx="37" cy="675.6" r="1.3" stroke-width="0.9" stroke="#a8a8a8"/><path d="M35.8 673.2 H38.2" stroke-width="0.8" stroke="#a0a0a0"/>
</svg>
<svg style="left:80px;top:662px" width="32" height="32" viewBox="80 662 32 32" fill="none" stroke="#dcdcdc" stroke-width="1.3" stroke-linejoin="round">
<path d="M83.2 687.6 V668.6 Q83.2 666.7 85.1 666.7 H92.6 Q93.8 666.7 94.4 667.8 L95 668.9 Q95.4 669.6 96.4 669.6 H107 Q109.4 669.6 109.4 672 V687.6 Q109.4 689.6 107.4 689.6 H85.2 Q83.2 689.6 83.2 687.6 Z"/>
<path d="M83.4 673.9 H109.2" stroke-width="1.4"/>
</svg>
<svg style="left:140px;top:660px" width="36" height="36" viewBox="140 660 36 36" fill="none" stroke="#dcdcdc" stroke-width="1.3" stroke-linejoin="round"><path d="M154.84 667.59 L156.32 663.85 L160.48 663.85 L161.96 667.59 A3.85 3.85 0 0 0 163.24 668.12 L166.93 666.52 L169.88 669.47 L168.28 673.16 A3.85 3.85 0 0 0 168.81 674.44 L172.55 675.92 L172.55 680.08 L168.81 681.56 A3.85 3.85 0 0 0 168.28 682.84 L169.88 686.53 L166.93 689.48 L163.24 687.88 A3.85 3.85 0 0 0 161.96 688.41 L160.48 692.15 L156.32 692.15 L154.84 688.41 A3.85 3.85 0 0 0 153.56 687.88 L149.87 689.48 L146.92 686.53 L148.52 682.84 A3.85 3.85 0 0 0 147.99 681.56 L144.25 680.08 L144.25 675.92 L147.99 674.44 A3.85 3.85 0 0 0 148.52 673.16 L146.92 669.47 L149.87 666.52 L153.56 668.12 A3.85 3.85 0 0 0 154.84 667.59 Z"/><circle cx="158.4" cy="678" r="6.3"/></svg>
<svg style="left:204px;top:661px" width="34" height="34" viewBox="204 661 34 34" fill="none" stroke="#dcdcdc" stroke-width="1.3" stroke-linecap="round"><circle cx="220.8" cy="678.1" r="13.8"/><path d="M216.9 673.4 Q217.4 670.6 220.6 670.6 Q224.4 670.7 224.4 673.8 Q224.4 675.8 222.4 677.2 Q220.8 678.4 220.8 681.6"/><circle cx="220.8" cy="684.8" r="0.9" fill="#dcdcdc" stroke="none"/></svg>
<svg style="left:266px;top:662px" width="34" height="32" viewBox="266 662 34 32" fill="none" stroke="#dcdcdc" stroke-width="1.3" stroke-linejoin="round">
<rect x="271" y="682.2" width="23.4" height="7.8" rx="1.6" stroke="#c4c4c4" stroke-width="1.5"/>
<path d="M280.1 667 H285.5 V678.6 H288.8 L282.8 685.2 L276.8 678.6 H280.1 Z" fill="#212121"/>
</svg>
<div class="b" style="left:344.2px;top:668.6px;width:5px;height:4px;background:#74f000;border-radius:1px;"></div>
<div class="b" style="left:342px;top:675.6px;width:7.2px;height:3px;background:#74f000;"></div>
<div class="b" style="left:344.8px;top:675.6px;width:4.4px;height:10px;background:#74f000;"></div>
<div class="b" style="left:342px;top:685px;width:9.4px;height:3.4px;background:#74f000;border-radius:0.6px;"></div>
<span class="t" style="font-size:18.2px;color:#cecece;transform:translate(369.24px,668.80px) scaleX(0.9858);">USB flash disk insertion</span>
<span class="t" style="font-size:16.1px;color:#cecece;transform:translate(917.73px,661.20px) scaleX(0.9579);">20:18</span>
<span class="t" style="font-size:16.1px;color:#cecece;transform:translate(897.28px,679.90px) scaleX(0.9622);">2025-08-15</span>
<svg style="left:996px;top:662px" width="34" height="32" viewBox="996 662 34 32" fill="none" stroke="#dcdcdc" stroke-width="1.1" stroke-linejoin="miter"><path d="M1009.49 673.71 L1004.78 669.00 L1006.13 667.66 L1000.40 666.60 L1001.46 672.33 L1002.80 670.98 L1007.51 675.69 Z"/><path d="M1017.29 675.69 L1022.00 670.98 L1023.34 672.33 L1024.40 666.60 L1018.67 667.66 L1020.02 669.00 L1015.31 673.71 Z"/><path d="M1007.51 680.51 L1002.80 685.22 L1001.46 683.87 L1000.40 689.60 L1006.13 688.54 L1004.78 687.20 L1009.49 682.49 Z"/><path d="M1015.31 682.49 L1020.02 687.20 L1018.67 688.54 L1024.40 689.60 L1023.34 683.87 L1022.00 685.22 L1017.29 680.51 Z"/></svg>
<svg style="left:834px;top:668px" width="46" height="20" viewBox="834 668 46 20" fill="none" stroke="#cfcfcf" stroke-width="1" stroke-linejoin="round">
<rect x="837.4" y="673.4" width="5.2" height="3.8" stroke="#bdbdbd"/>
<path d="M840 677.4 V682.2 Q840 682.8 840.8 682.8 H846.4 Q847.2 682.8 847.2 682 V677.6 H840.4" stroke="#d6d6d6" stroke-width="1.1"/>
<path d="M850.4 682.6 V678.2 H859 V682.6" stroke-width="1.1"/>
<path d="M852.2 678 V673.6 H857.2 V678" stroke-width="1"/><path d="M853.6 675.6 H855.8" stroke="#9a9a9a" stroke-width="0.9"/>
<path d="M867.6 673.4 L873.4 683 H861.8 Z" fill="#f0372e" stroke="#f0372e" stroke-width="1.2"/>
<rect x="866.8" y="676" width="1.7" height="3.8" rx="0.5" fill="#140403" stroke="none"/><rect x="866.8" y="680.5" width="1.7" height="1.6" rx="0.5" fill="#140403" stroke="none"/>
</svg>
</div></body></html>
